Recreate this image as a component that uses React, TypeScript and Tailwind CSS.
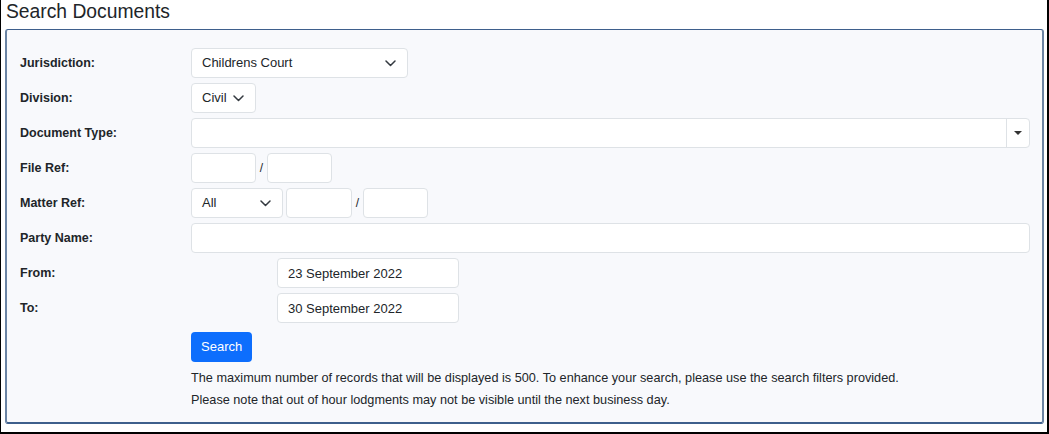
import React from 'react';

const font = { fontFamily: '"Liberation Sans", Arial, sans-serif' };

const Chevron: React.FC = () => (
  <svg width="11" height="7" viewBox="0 0 11 7" fill="none">
    <path d="M1 1l4.5 4.5L10 1" stroke="#343a40" strokeWidth="1.5" strokeLinecap="round" strokeLinejoin="round" />
  </svg>
);

const Select: React.FC<{ value: string; className: string }> = ({ value, className }) => (
  <div className={`h-[30px] flex items-center justify-between pl-[10px] pr-[11px] bg-white border border-[#dee2e6] rounded-[4px] text-[13px] text-[#212529] ${className}`}>
    <span>{value}</span>
    <Chevron />
  </div>
);

const Input: React.FC<{ className: string; value?: string }> = ({ className, value }) => (
  <input
    type="text"
    defaultValue={value}
    className={`h-[30px] px-[10px] bg-white border border-[#dee2e6] rounded-[4px] text-[13px] text-[#212529] outline-none ${className}`}
  />
);

const Row: React.FC<{ label: string; children: React.ReactNode }> = ({ label, children }) => (
  <div className="flex items-center h-[30px] mb-[5px]">
    <div className="w-[171px] shrink-0 text-[12.5px] font-bold text-[#212529]">{label}</div>
    <div className="flex-1 flex items-center">{children}</div>
  </div>
);

const Slash: React.FC = () => <span className="w-[11px] text-center text-[12px] text-[#212529]">/</span>;

export default function App() {
  return (
    <div style={font} className="w-[1049px] h-[434px] bg-white border-l border-r-2 border-b-2 border-black flex flex-col">
      <h1 className="h-[29px] pl-[5px] pt-[1px] text-[19.3px] leading-[22px] text-[#212529]">Search Documents</h1>
      <div className="ml-[4px] mr-[3px] h-[395px] bg-[#f8f9fc] border border-l-2 border-b-2 border-r-2 border-[#6a83a3] border-t-[#3e5f8c] border-b-[#3e5f8c] rounded-[3px] pl-[13px] pr-[12px] pt-[18px]">
        <Row label="Jurisdiction:">
          <Select value="Childrens Court" className="w-[217px]" />
        </Row>
        <Row label="Division:">
          <Select value="Civil" className="w-[65px]" />
        </Row>
        <Row label="Document Type:">
          <div className="flex-1 h-[30px] flex bg-white border border-[#dee2e6] rounded-[4px]">
            <div className="flex-1" />
            <div className="w-[23px] border-l border-[#dee2e6] flex items-center justify-center">
              <svg width="8" height="4" viewBox="0 0 8 4">
                <path d="M0 0h8L4 4z" fill="#333" />
              </svg>
            </div>
          </div>
        </Row>
        <Row label="File Ref:">
          <Input className="w-[65px]" />
          <Slash />
          <Input className="w-[65px]" />
        </Row>
        <Row label="Matter Ref:">
          <Select value="All" className="w-[92px]" />
          <Input className="w-[66px] ml-[3px]" />
          <Slash />
          <Input className="w-[65px]" />
        </Row>
        <Row label="Party Name:">
          <Input className="flex-1" />
        </Row>
        <Row label="From:">
          <Input className="w-[182px] ml-[86px]" value="23 September 2022" />
        </Row>
        <Row label="To:">
          <Input className="w-[182px] ml-[86px]" value="30 September 2022" />
        </Row>
        <div className="pl-[171px] pt-[4px]">
          <button className="h-[30px] px-[10px] bg-[#0d6efd] text-white text-[13px] rounded-[4px]">Search</button>
          <p className="mt-[5px] text-[12.7px] leading-[22px] text-[#212529]">
            The maximum number of records that will be displayed is 500. To enhance your search, please use the search filters provided.
          </p>
          <p className="text-[12.7px] leading-[22px] text-[#212529]">
            Please note that out of hour lodgments may not be visible until the next business day.
          </p>
        </div>
      </div>
    </div>
  );
}
